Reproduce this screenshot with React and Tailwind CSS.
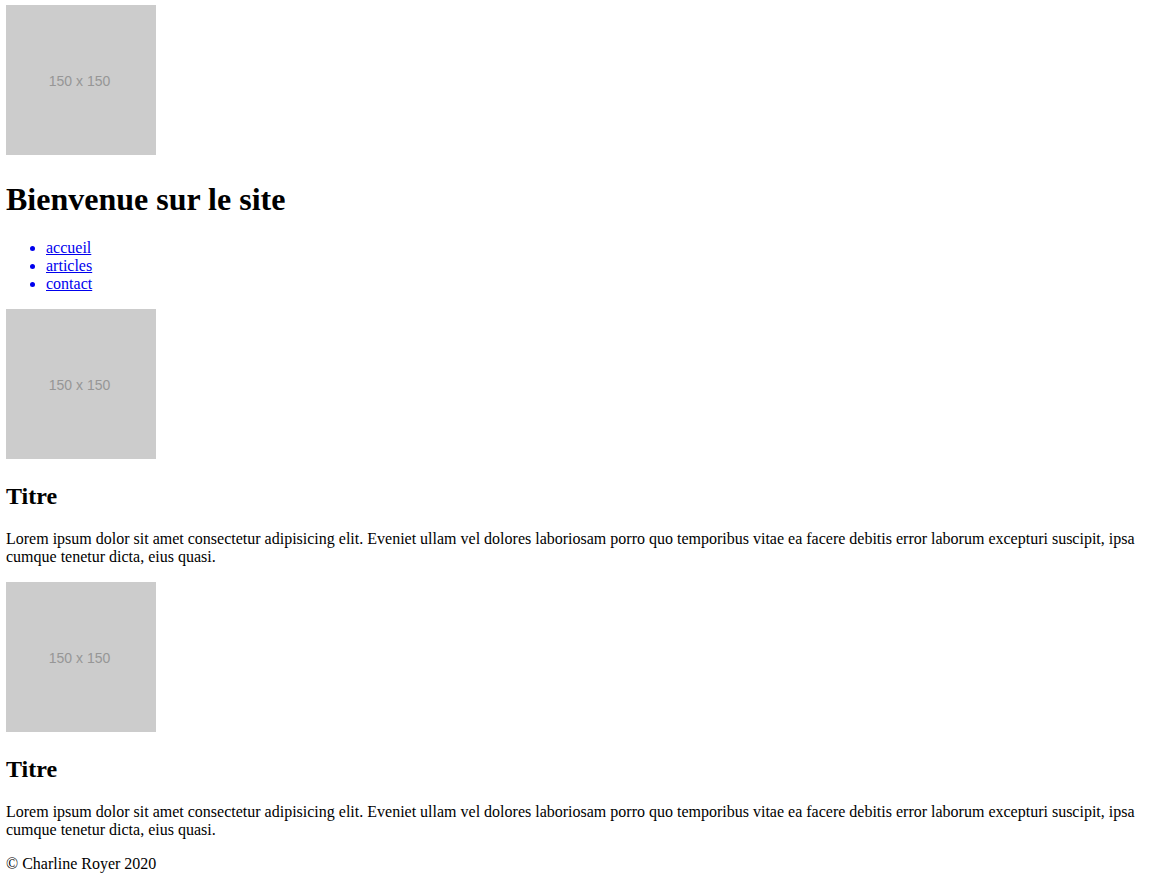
function Placeholder() {
  return (
    <div className="w-[150px] h-[150px] bg-[#cccccc] flex items-center justify-center">
      <span className="text-[14px] leading-none text-[#969696] font-['Liberation_Sans',Arial,sans-serif] -ml-[3px] mt-[2px]">150 x 150</span>
    </div>
  )
}

function Article() {
  return (
    <article>
      <div className="pb-[4px]">
        <Placeholder />
      </div>
      <h2 className="mt-[20px] mb-[20px] text-[24px] leading-[27px] font-bold">Titre</h2>
      <p className="mb-[16px]">
        Lorem ipsum dolor sit amet consectetur adipisicing elit. Eveniet ullam vel dolores laboriosam porro quo temporibus vitae ea facere debitis error laborum excepturi suscipit, ipsa cumque tenetur dicta, eius quasi.
      </p>
    </article>
  )
}

export default function App() {
  return (
    <div className="min-h-screen bg-white text-black text-[16px] leading-[18px] font-['Liberation_Serif','Times_New_Roman',serif] pl-[6px] pr-[8px] pt-[5px]">
      <header>
        <div className="pb-[4px]">
          <Placeholder />
        </div>
        <h1 className="mt-[22px] mb-[21px] text-[32px] leading-[37px] font-bold">Bienvenue sur le site</h1>
        <nav>
          <ul className="list-disc pl-[40px] mb-[16px] text-[#0000ee]">
            <li><a href="#" className="underline">accueil</a></li>
            <li><a href="#" className="underline">articles</a></li>
            <li><a href="#" className="underline">contact</a></li>
          </ul>
        </nav>
      </header>

      <main>
        <Article />
        <Article />
      </main>

      <footer>
        <p>© Charline Royer 2020</p>
      </footer>
    </div>
  )
}
